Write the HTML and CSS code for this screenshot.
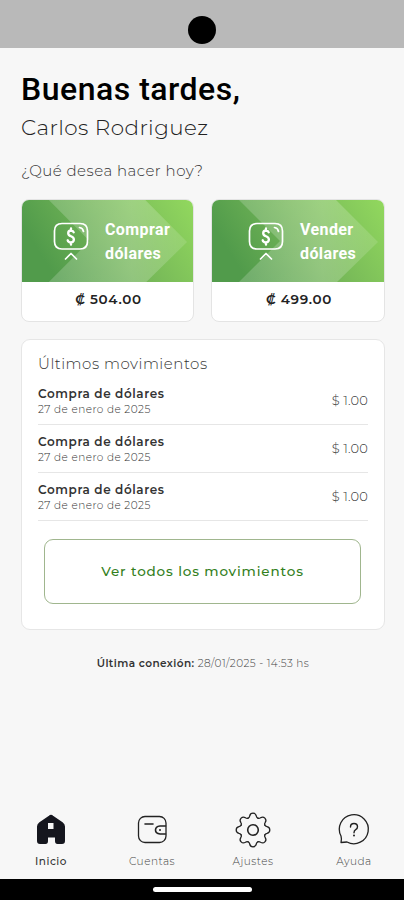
FILE: index.html
```
<!DOCTYPE html>
<html lang="es">
<head>
<meta charset="utf-8">
<title>Inicio</title>
<link rel="stylesheet" href="styles.css">
</head>
<body>
<svg class="defs" width="0" height="0">
  <defs>
    <linearGradient id="base" x1="0" y1="0.3" x2="1" y2="0"><stop offset="0" stop-color="#519b4b"/><stop offset=".5" stop-color="#76b858"/><stop offset="1" stop-color="#92d85e"/></linearGradient>
    <linearGradient id="arrow" x1="0" y1="0" x2="1" y2="0"><stop offset="0" stop-color="#fff" stop-opacity=".18"/><stop offset=".6" stop-color="#fff" stop-opacity=".24"/><stop offset="1" stop-color="#fff" stop-opacity=".12"/></linearGradient>
    <symbol id="bg" viewBox="0 0 172 82" preserveAspectRatio="none">
      <rect width="172" height="82" fill="url(#base)"/>
      <path d="M27 0H124L166 42L125 82H27L68 41Z" fill="url(#arrow)"/>
    </symbol>
    <symbol id="money" viewBox="0 0 36 40">
      <g fill="none" stroke="#fff" stroke-width="1.7" stroke-linecap="round" stroke-linejoin="round">
        <path d="M9 1.500H27Q34.500 1.500 34.500 9V19.500Q34.500 27 27 27H9Q1.500 27 1.500 19.500V9Q1.500 1.500 9 1.500Z"/>
        <path d="M26.500 5.500Q30 6.200 30.500 9.500"/>
        <path d="M12.500 37L18 31.500L23.500 37"/>
        <path stroke-width="2.300" d="M20.700 10.300Q20 8.500 18 8.500Q15.200 8.600 15.200 11.200Q15.200 13.200 18 14.300Q20.900 15.500 20.900 17.700Q20.700 20.300 18 20.300Q15.300 20.300 14.700 18.300M18 6.300V8.300M18 20.500V22.700"/>
      </g>
    </symbol>
    <path id="tooth" d="M-4.900-11.800Q-3.600-12.300-3.300-14Q-2.700-16.800 0-16.800Q2.700-16.800 3.300-14Q3.600-12.300 4.900-11.800"/>
  </defs>
</svg>
<header class="status"><span class="camera"></span></header>
<main>
  <h1>Buenas tardes,</h1>
  <p class="name">Carlos Rodriguez</p>
  <p class="question">¿Qué desea hacer hoy?</p>
  <section class="actions">
    <a class="action">
      <div class="banner"><svg class="banner-bg"><use href="#bg"/></svg><svg class="money"><use href="#money"/></svg><span>Comprar<br>dólares</span></div>
      <div class="rate">₡ 504.00</div>
    </a>
    <a class="action sell">
      <div class="banner"><svg class="banner-bg"><use href="#bg"/></svg><svg class="money"><use href="#money"/></svg><span>Vender<br>dólares</span></div>
      <div class="rate">₡ 499.00</div>
    </a>
  </section>
  <section class="movements">
    <h2>Últimos movimientos</h2>
    <ul>
      <li><div><strong>Compra de dólares</strong><small>27 de enero de 2025</small></div><span class="amount">$ 1.00</span></li>
      <li><div><strong>Compra de dólares</strong><small>27 de enero de 2025</small></div><span class="amount">$ 1.00</span></li>
      <li><div><strong>Compra de dólares</strong><small>27 de enero de 2025</small></div><span class="amount">$ 1.00</span></li>
    </ul>
    <button>Ver todos los movimientos</button>
  </section>
  <p class="last"><b>Última conexión:</b> <span>28/01/2025 - 14:53 hs</span></p>
</main>
<nav>
  <a class="active"><svg viewBox="-18 -18 36 36"><path fill="#15161e" stroke="#15161e" stroke-width="2" stroke-linejoin="round" fill-rule="evenodd" d="M-1.500-13.500Q0-14.800 1.500-13.500L11-7Q13-5.500 13-3.500V11Q13 13 11 13H6.500Q5 13 5 11V6.500H-4V11Q-4 13-5.500 13H-11Q-13 13-13 11V-3.500Q-13-5.500-11-7ZM-4-8V0H3.500V-8Z"/></svg><span>Inicio</span></a>
  <a><svg viewBox="-18 -18 36 36"><rect x="-13.500" y="-13.500" width="27.500" height="26" rx="6.500"/><path stroke-width="1.600" d="M-7-6H1M13.500-4H8Q3.500-3.500 3.500 0Q3.500 3.500 8 4H13.500"/><circle class="dot" cx="8" cy="0" r="1"/></svg><span>Cuentas</span></a>
  <a><svg viewBox="-18 -18 36 36"><g><use href="#tooth"/><use href="#tooth" transform="rotate(45)"/><use href="#tooth" transform="rotate(90)"/><use href="#tooth" transform="rotate(135)"/><use href="#tooth" transform="rotate(180)"/><use href="#tooth" transform="rotate(225)"/><use href="#tooth" transform="rotate(270)"/><use href="#tooth" transform="rotate(315)"/></g><circle r="5.300" stroke-width="1.600"/></svg><span>Ajustes</span></a>
  <a><svg viewBox="-18 -18 36 36"><path d="M-13 6A14.500 14.500 0 1 1-7 12L-13 12.500Q-12 9.500-13 6Z"/><path stroke-width="1.400" d="M-3.500-3Q-3.500-6.500 0-6.500Q3.500-6.500 3.500-3.200Q3.500-1.200 1.700-.3Q0 .6 0 2.700"/><circle class="dot" cx="0" cy="5.600" r="1"/></svg><span>Ayuda</span></a>
</nav>
<footer><span></span></footer>
</body>
</html>
```
FILE: styles.css
```
* { box-sizing: border-box; margin: 0; padding: 0; }
body { width: 404px; height: 900px; overflow: hidden; display: flex; flex-direction: column; background: #f7f7f7; color: #222; font-family: Montserrat, Inter, sans-serif; }
.defs { position: absolute; }
.status { height: 48px; flex: none; background: #b9b9b9; display: flex; justify-content: center; padding-top: 16px; }
.camera { width: 28px; height: 28px; border-radius: 50%; background: #000; }
main { flex: 1; padding: 21px 19px 0 21px; }
h1 { font: 500 32px/40px Roboto, sans-serif; letter-spacing: .5px; color: #000; white-space: nowrap; }
.name { font-size: 21.500px; line-height: 28px; font-weight: 300; letter-spacing: .45px; margin-top: 4px; }
.question { font-size: 15px; line-height: 20px; font-weight: 300; letter-spacing: .48px; margin-top: 20px; color: #333; }
.actions { display: grid; grid-template-columns: 173px 174px; gap: 17px; margin-top: 18px; }
.action { height: 123px; border: 1px solid #e4e4e4; border-radius: 8px; background: #fff; overflow: hidden; }
.banner { position: relative; height: 82px; display: flex; align-items: center; padding: 2px 0 0 31px; color: #fff; font: 700 16px/24px Roboto, sans-serif; letter-spacing: .4px; }
.banner-bg { position: absolute; inset: 0; width: 100%; height: 100%; }
.money { position: relative; width: 36px; height: 40px; flex: none; margin-right: 16px; }
.banner span { position: relative; }
.sell .banner { padding-left: 36px; }
.rate { text-align: center; font-size: 13.500px; line-height: 34px; font-weight: 600; letter-spacing: .65px; padding-left: 2px; color: #222; }
.movements { height: 291px; margin-top: 17px; border: 1px solid #e6e6e6; border-radius: 9px; background: #fff; padding: 13px 16px; }
h2 { font-size: 15px; line-height: 22px; font-weight: 300; letter-spacing: .52px; color: #333; }
ul { list-style: none; }
li { height: 48px; display: flex; align-items: center; justify-content: space-between; border-bottom: 1px solid #e6e6e6; }
li:first-child { margin-top: 2px; }
li div { padding-top: 2px; }
li strong, li small { display: block; white-space: nowrap; }
strong { font-size: 12px; line-height: 17px; font-weight: 600; letter-spacing: .6px; color: #333; }
small { font-size: 10.500px; line-height: 16px; font-weight: 300; letter-spacing: .45px; color: #333; }
.amount { font-size: 13px; font-weight: 300; letter-spacing: .15px; color: #333; padding-bottom: 2px; }
button { display: block; width: 317px; height: 65px; margin: 18px 0 0 6px; padding-bottom: 2px; border: 1px solid #a0b68e; border-radius: 9px; background: transparent; font: 500 13.500px Montserrat, Inter, sans-serif; letter-spacing: .85px; color: #33801c; }
.last { text-align: center; margin-top: 26px; font-size: 10.500px; line-height: 16px; letter-spacing: .42px; color: #444; font-weight: 300; }
.last b { font-weight: 600; color: #333; }
nav { flex: none; height: 68px; display: grid; grid-template-columns: repeat(4, 101px); }
nav a { display: flex; flex-direction: column; align-items: center; font-size: 10.500px; line-height: 14px; font-weight: 300; letter-spacing: .5px; color: #444; padding-left: 1px; }
nav svg { width: 36px; height: 36px; margin: 1px 0 7px; fill: none; stroke: #222; stroke-width: 1.300; stroke-linecap: round; stroke-linejoin: round; overflow: visible; }
nav .dot { fill: #222; stroke: none; }
nav .active { color: #333; font-weight: 500; }
footer { flex: none; height: 21px; background: #000; display: flex; justify-content: center; padding-top: 8px; }
footer span { width: 99px; height: 5px; border-radius: 3px; background: #fff; }
```
